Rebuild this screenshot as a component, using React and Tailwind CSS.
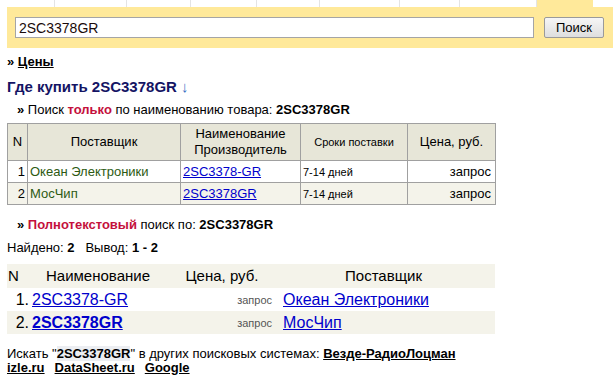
import React from 'react';

const tabs = [55, 72, 64, 66, 63, 80, 60, 77];

function TopSearch() {
  return (
    <div>
      <div className="flex h-[7px]">
        {tabs.map((w, i) => (
          <div key={i} className="border-r border-[#e4e4e4]" style={{ width: w }} />
        ))}
        <div className="w-[56px] bg-[#ffe99a]" />
      </div>
      <div className="ml-[7px] h-[41px] bg-[#ffe99a] flex items-center pl-[8px]">
        <div className="w-[519px] h-[21px] bg-white border border-[#a5a5a5] flex items-center pl-[3px] text-[14px] text-[#1a0a0a]">
          2SC3378GR
        </div>
        <button className="ml-[10px] w-[60px] h-[21px] border border-[#9a9a9a] rounded-[2px] bg-gradient-to-b from-[#f6f6f6] to-[#dedede] text-[13px] text-black leading-none">
          Поиск
        </button>
      </div>
    </div>
  );
}

function PriceTable() {
  const th = 'border border-[#a0a0a0] font-normal text-center px-[2px]';
  const td = 'border border-[#a0a0a0] px-[2px] h-[22px]';
  const rows = [
    { n: 1, s: 'Океан Электроники', p: '2SC3378-GR', bg: 'bg-white' },
    { n: 2, s: 'МосЧип', p: '2SC3378GR', bg: 'bg-[#f4f3ea]' },
  ];
  return (
    <table className="ml-[7px] mt-[5px] w-[488px] table-fixed border-collapse text-[13px]">
      <colgroup>
        <col className="w-[20px]" />
        <col className="w-[153px]" />
        <col className="w-[120px]" />
        <col className="w-[107px]" />
        <col className="w-[88px]" />
      </colgroup>
      <thead>
        <tr className="bg-[#e7e6d8] h-[37px]">
          <th className={th}>N</th>
          <th className={th}>Поставщик</th>
          <th className={th + ' leading-[16px]'}>Наименование<br />Производитель</th>
          <th className={th + ' text-[11px]'}>Сроки поставки</th>
          <th className={th}>Цена, руб.</th>
        </tr>
      </thead>
      <tbody>
        {rows.map((r) => (
          <tr key={r.n} className={r.bg}>
            <td className={td + ' text-right'}>{r.n}</td>
            <td className={td + ' text-[#2d5a12]'}>{r.s}</td>
            <td className={td}><a href="#" className="text-[#0000cc] underline">{r.p}</a></td>
            <td className={td + ' text-[11px]'}>7-14 дней</td>
            <td className={td + ' text-right pr-[4px]'}>запрос</td>
          </tr>
        ))}
      </tbody>
    </table>
  );
}

function ResultTable() {
  const rows = [
    { n: '1.', name: '2SC3378-GR', s: 'Океан Электроники', bg: 'bg-white', bold: false },
    { n: '2.', name: '2SC3378GR', s: 'МосЧип', bg: 'bg-[#f4f3ea]', bold: true },
  ];
  return (
    <table className="ml-[7px] mt-[8px] w-[488px] table-fixed border-collapse text-[16px] leading-[18px]">
      <colgroup>
        <col className="w-[23px]" />
        <col className="w-[136px]" />
        <col className="w-[112px]" />
        <col />
      </colgroup>
      <thead>
        <tr className="bg-[#f4f3ea] h-[24px] text-[15px]">
          <th className="font-normal text-left pl-[1px]">N</th>
          <th className="font-normal text-center">Наименование</th>
          <th className="font-normal text-center">Цена, руб.</th>
          <th className="font-normal text-center pr-[6px]">Поставщик</th>
        </tr>
      </thead>
      <tbody>
        {rows.map((r) => (
          <tr key={r.n} className={r.bg + ' h-[23px]'}>
            <td className="text-right pr-[1px]">{r.n}</td>
            <td className="pl-[2px]">
              <a href="#" className={'text-[#0000cc] underline' + (r.bold ? ' font-bold' : '')}>{r.name}</a>
            </td>
            <td className="text-right text-[11px] text-[#555] pr-[6px]">запрос</td>
            <td className="pl-[5px]"><a href="#" className="text-[#0000cc] underline">{r.s}</a></td>
          </tr>
        ))}
      </tbody>
    </table>
  );
}

export default function App() {
  return (
    <div className="w-[613px] h-[381px] bg-white text-black overflow-hidden text-[13px] leading-[16px]" style={{ fontFamily: '"Liberation Sans", Arial, sans-serif' }}>
      <TopSearch />
      <div className="ml-[7px] mt-[6px] font-bold">» <a href="#" className="underline text-black">Цены</a></div>
      <div className="ml-[7px] mt-[7px] text-[15px] leading-[20px] font-bold text-[#141464]">
        Где купить 2SC3378GR <span className="font-normal text-[#3a6fc4]">↓</span>
      </div>
      <div className="ml-[17px] mt-[5px]">
        <b>»</b> Поиск <b className="text-[#c4103c]">только</b> по наименованию товара: <b>2SC3378GR</b>
      </div>
      <PriceTable />
      <div className="ml-[17px] mt-[12px]">
        <b>» <span className="text-[#c4103c]">Полнотекстовый</span></b> поиск по: <b>2SC3378GR</b>
      </div>
      <div className="ml-[7px] mt-[7px]">
        Найдено: <b>2</b>&nbsp;&nbsp; Вывод: <b>1 - 2</b>
      </div>
      <ResultTable />
      <div className="ml-[7px] mt-[13px] leading-[14px]">
        <div>
          Искать "<b className="bg-[#eceef2]">2SC3378GR</b>" в других поисковых системах:{' '}
          <a href="#" className="font-bold underline text-black">Везде-РадиоЛоцман</a>
        </div>
        <div className="flex gap-[10px] font-bold">
          <a href="#" className="underline text-black">izle.ru</a>
          <a href="#" className="underline text-black">DataSheet.ru</a>
          <a href="#" className="underline text-black">Google</a>
        </div>
      </div>
    </div>
  );
}
